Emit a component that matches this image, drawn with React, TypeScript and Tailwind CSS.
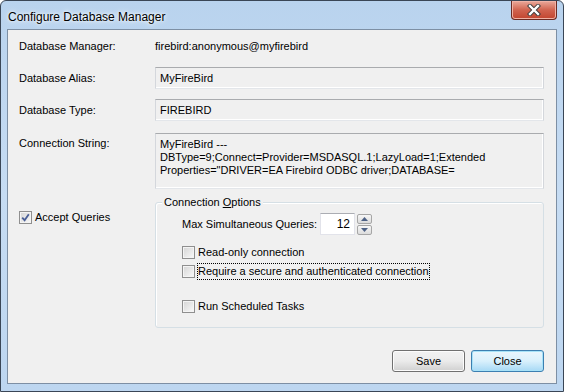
import React from "react";

const font = { fontFamily: '"Liberation Sans", Arial, sans-serif' };

function Check({ checked = false }: { checked?: boolean }) {
  return (
    <span className="flex h-[13px] w-[13px] shrink-0 items-center justify-center border border-[#8f8f8f] bg-white">
      <span className="flex h-[11px] w-[11px] items-center justify-center border border-[#f4f4f4] bg-gradient-to-br from-[#d8d8d8] to-[#f6f6f6]">
        {checked && (
          <svg width="9" height="9" viewBox="0 0 9 9">
            <path d="M1.2 4.6 L3.6 7.2 L7.8 1.2" fill="none" stroke="#4a5f97" strokeWidth="1.8" />
          </svg>
        )}
      </span>
    </span>
  );
}

function Field({ children, tall = false }: { children: React.ReactNode; tall?: boolean }) {
  return (
    <div
      className={`border border-[#d4d7dc] border-t-[#a9abae] border-b-[#e3e6ea] bg-[#f0f0f0] px-[4px] text-[11px] text-black shadow-[inset_-1px_-1px_0_#ffffff] ${
        tall ? "h-[56px] pt-[4px] leading-[13px]" : "flex h-[22px] items-center"
      }`}
    >
      {children}
    </div>
  );
}

function Win7Button({ label, focused = false }: { label: string; focused?: boolean }) {
  return (
    <button
      className={`h-[22px] w-[73px] rounded-[3px] border text-[11px] text-black ${
        focused
          ? "border-[#3c7fb1] bg-gradient-to-b from-[#eaf6fd] via-[#d9f0fc] to-[#a7d9f5] shadow-[inset_0_0_0_1px_#a7e2f8]"
          : "border-[#707070] bg-gradient-to-b from-[#f2f2f2] via-[#ebebeb] to-[#d0d0d0] shadow-[inset_0_0_0_1px_#fcfcfc]"
      }`}
      style={font}
    >
      {label}
    </button>
  );
}

export default function App() {
  return (
    <div className="h-[392px] w-[564px] bg-white" style={font}>
      <div className="flex h-[392px] w-[564px] flex-col rounded-t-[6px] border border-[#3a4656] bg-gradient-to-b from-[#b9d3ee] via-[#c6dcf3] to-[#bdd6f0]">
        {/* Title bar */}
        <div className="flex h-[28px] shrink-0 items-start justify-between">
          <span className="pl-[7px] pt-[7px] text-[12px] text-black [text-shadow:0_0_6px_#ffffff,0_0_3px_#ffffff]">
            Configure Database Manager
          </span>
          <div className="mr-[6px] flex h-[19px] w-[46px] items-center justify-center rounded-b-[4px] border border-t-0 border-[#6b2b23] bg-gradient-to-b from-[#e9a99b] via-[#d0634f] to-[#c2442e] shadow-[inset_0_0_0_1px_#f0b3a6]">
            <svg width="16" height="12" viewBox="0 0 16 12">
              <path d="M4 2 L12 10 M12 2 L4 10" stroke="#3b3b3b" strokeWidth="4.2" strokeLinecap="square" />
              <path d="M4 2 L12 10 M12 2 L4 10" stroke="#ffffff" strokeWidth="2.4" strokeLinecap="square" />
            </svg>
          </div>
        </div>

        {/* Client area */}
        <div className="mx-[6px] h-[355px] border border-[#7d8fa4] bg-[#f0f0f0] pl-[11px] pr-[12px] pt-[5px] text-[11px] text-black">
          <div className="grid grid-cols-[136px_1fr] gap-y-[10px]">
            <div className="flex h-[22px] items-center">Database Manager:</div>
            <div className="flex h-[22px] items-center">firebird:anonymous@myfirebird</div>

            <div className="flex h-[22px] items-center">Database Alias:</div>
            <Field>MyFireBird</Field>

            <div className="flex h-[22px] items-center">Database Type:</div>
            <Field>FIREBIRD</Field>

            <div className="mt-[2px] pt-[4px] leading-[13px]">Connection String:</div>
            <div className="mt-[2px]">
              <Field tall>
                MyFireBird ---
                <br />
                DBType=9;Connect=Provider=MSDASQL.1;LazyLoad=1;Extended
                <br />
                Properties="DRIVER=EA Firebird ODBC driver;DATABASE=
              </Field>
            </div>
          </div>

          {/* Accept queries + options */}
          <div className="mt-[13px] grid grid-cols-[136px_1fr]">
            <label className="mt-[9px] flex h-[13px] items-center gap-[3px]">
              <Check checked />
              <span>Accept Queries</span>
            </label>

            <div className="relative h-[126px] rounded-[3px] border border-[#d5dfe5] shadow-[inset_1px_1px_0_#ffffff]">
              <span className="absolute -top-[8px] left-[6px] bg-[#f0f0f0] px-[2px] leading-[14px]">
                Connection <span className="underline">O</span>ptions
              </span>

              <div className="pl-[26px] pt-[10px]">
                <div className="flex h-[22px] items-center">
                  <span className="w-[138px] shrink-0 whitespace-nowrap">Max Simultaneous Queries:</span>
                  <div className="flex h-[22px] w-[35px] items-center justify-end border border-[#e2e3ea] border-t-[#abadb3] bg-white pr-[4px] text-[12px]">
                    12
                  </div>
                  <div className="ml-[2px] flex flex-col gap-[1px]">
                    <span className="flex h-[10px] w-[15px] items-center justify-center rounded-[2px] border border-[#a6a6a6] bg-gradient-to-b from-[#f7f7f7] to-[#dcdcdc]">
                      <svg width="7" height="4" viewBox="0 0 7 4">
                        <path d="M0 4 L3.5 0 L7 4 Z" fill="#4d6185" />
                      </svg>
                    </span>
                    <span className="flex h-[10px] w-[15px] items-center justify-center rounded-[2px] border border-[#a6a6a6] bg-gradient-to-b from-[#f7f7f7] to-[#dcdcdc]">
                      <svg width="7" height="4" viewBox="0 0 7 4">
                        <path d="M0 0 L7 0 L3.5 4 Z" fill="#4d6185" />
                      </svg>
                    </span>
                  </div>
                </div>

                <label className="mt-[11px] flex h-[13px] items-center gap-[3px]">
                  <Check />
                  <span>Read-only connection</span>
                </label>
                <label className="mt-[6px] flex h-[13px] items-center gap-[2px]">
                  <Check />
                  <span className="border border-dotted border-black leading-[15px]">
                    Require a secure and authenticated connection
                  </span>
                </label>
                <label className="mt-[22px] flex h-[13px] items-center gap-[3px]">
                  <Check />
                  <span>Run Scheduled Tasks</span>
                </label>
              </div>
            </div>
          </div>

          {/* Buttons */}
          <div className="mt-[22px] flex justify-end gap-[6px]">
            <Win7Button label="Save" />
            <Win7Button label="Close" focused />
          </div>
        </div>
      </div>
    </div>
  );
}
